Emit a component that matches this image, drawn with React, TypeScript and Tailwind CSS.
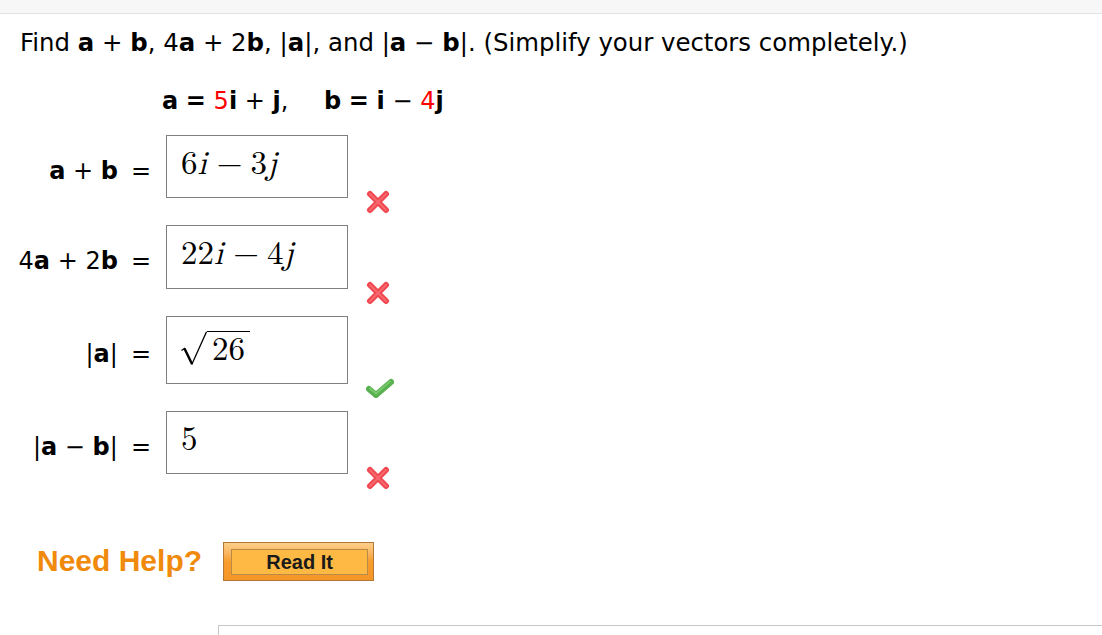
import React from 'react';

const sans = { fontFamily: '"DejaVu Sans", Verdana, sans-serif' };
const serif = { fontFamily: '"Latin Modern Math", "Liberation Serif", "Times New Roman", serif' };

const Cross = () => (
  <svg width="24" height="24" viewBox="0 0 24 24">
    <path d="M4 4 L20 20 M20 4 L4 20" stroke="#f0474f" strokeWidth="6" strokeLinecap="round" />
    <path d="M4 4 L20 20 M20 4 L4 20" stroke="#fb7d83" strokeWidth="2" strokeLinecap="round" opacity="0.6" />
  </svg>
);

const Check = () => (
  <svg width="28" height="24" viewBox="0 0 28 24">
    <path d="M3 13 L10 19 L25 6" stroke="#58b04f" strokeWidth="6" strokeLinecap="round" strokeLinejoin="round" fill="none" />
    <path d="M4 12.5 L10 17.5 L24 5.5" stroke="#86d27a" strokeWidth="2" strokeLinecap="round" strokeLinejoin="round" fill="none" opacity="0.7" />
  </svg>
);

type RowProps = {
  label: React.ReactNode;
  answer: React.ReactNode;
  correct?: boolean;
  height: string;
};

const AnswerRow = ({ label, answer, correct = false, height }: RowProps) => (
  <div className="flex items-center">
    <div className="mt-[8px] flex w-[166px] items-center justify-end pr-[15px] text-[24px] text-black">
      <span>{label}</span>
      <span className="ml-[13px]">=</span>
    </div>
    <div className="flex items-end">
      <div className={`flex w-[182px] ${height} items-center border border-[#808080] bg-white pl-[14px] text-black`} style={serif}>
        {answer}
      </div>
      <div className="-mb-[16px] ml-[18px]">{correct ? <Check /> : <Cross />}</div>
    </div>
  </div>
);

const Minus = () => <span className="ml-[10px] mr-[8px]">−</span>;

export default function App() {
  return (
    <div className="min-h-[635px] w-[1102px] overflow-hidden bg-white" style={sans}>
      <div className="h-[14px] border-b border-[#e3e3e3] bg-[#f7f7f7]" />

      <div className="pl-[20px] pt-[13px]">
        <p className="text-[24.4px] leading-[32px] text-black">
          Find <b>a</b> + <b>b</b>, 4<b>a</b> + 2<b>b</b>, |<b>a</b>|, and |<b>a</b> − <b>b</b>|. (Simplify your vectors completely.)
        </p>

        <p className="mt-[26px] pl-[142px] text-[24px] leading-[32px] text-black">
          <b>a</b> <b>=</b> <span className="text-[#ff0000]">5</span>
          <b>i</b> + <b>j</b>,<span className="inline-block w-[28px]" /> <b>b</b> <b>=</b> <b>i</b> −{' '}
          <span className="text-[#ff0000]">4</span>
          <b>j</b>
        </p>
      </div>

      <div className="mt-[18px] flex flex-col gap-[27px]">
        <AnswerRow
          label={
            <>
              <b>a</b> + <b>b</b>
            </>
          }
          height="h-[63px]"
          answer={
            <span className="-mt-[6px] text-[33px]">
              6<i>i</i>
              <Minus />3<i>j</i>
            </span>
          }
        />
        <AnswerRow
          label={
            <>
              4<b>a</b> + 2<b>b</b>
            </>
          }
          height="h-[64px]"
          answer={
            <span className="-mt-[6px] text-[33px]">
              22<i>i</i>
              <Minus />4<i>j</i>
            </span>
          }
        />
        <AnswerRow
          label={
            <>
              |<b>a</b>|
            </>
          }
          height="h-[68px]"
          correct
          answer={
            <span className="-mt-[1px] flex items-start text-[33px]">
              <svg width="27" height="34" viewBox="0 0 27 34" className="-ml-[1px]">
                <path d="M1.5 19.5 L4.5 17.5 L12 33 L26.5 0.75" stroke="#000" strokeWidth="1.3" fill="none" strokeLinejoin="miter" />
                <path d="M4.5 17.5 L12 33" stroke="#000" strokeWidth="2.4" fill="none" />
              </svg>
              <span className="border-t-[1.5px] border-black pl-[5px] pr-[5px] leading-[36px]">26</span>
            </span>
          }
        />
        <AnswerRow
          label={
            <>
              |<b>a</b> − <b>b</b>|
            </>
          }
          height="h-[63px]"
          answer={<span className="-mt-[6px] text-[33px]">5</span>}
        />
      </div>

      <div className="mt-[64px] flex items-center pl-[37px]">
        <span className="text-[30px] font-bold text-[#f08a0c]" style={{ fontFamily: '"Liberation Sans", Arial, sans-serif' }}>
          Need Help?
        </span>
        <button
          className="ml-[21px] mt-[2px] flex h-[39px] w-[151px] border border-[#b27635] bg-gradient-to-b from-[#fcd08a] via-[#f79d2c] to-[#f49628] pb-[5px] pl-[7px] pr-[5px] pt-[6px]"
          style={{ fontFamily: '"Liberation Sans", Arial, sans-serif' }}
        >
          <span className="flex h-full w-full items-center justify-center border border-[#b98a45] bg-[#fdb944] text-[20px] font-bold text-[#1a1a1a]">
            Read It
          </span>
        </button>
      </div>

      <div className="mt-[42px] ml-[218px] h-[12px] border-l border-t border-[#c6c6c6]" />
    </div>
  );
}
